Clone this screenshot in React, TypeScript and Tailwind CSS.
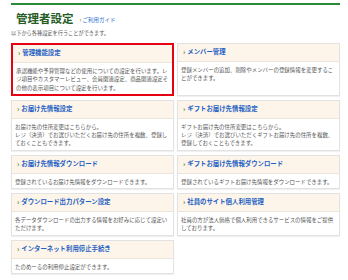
import React from 'react';

interface Item {
  title: string;
  lines: string[];
  active?: boolean;
}

const items: Item[] = [
  {
    title: '管理機能設定',
    lines: [
      '承認機能や予算管理などの使用についての設定を行います。レジ項目やカスタマーレビュー、会員関連設定、商品関連設定その他の表示項目について設定を行います。',
    ],
    active: true,
  },
  {
    title: 'メンバー管理',
    lines: ['登録メンバーの追加、削除やメンバーの登録情報を変更することができます。'],
  },
  {
    title: 'お届け先情報設定',
    lines: ['お届け先の住所変更はこちらから。', 'レジ（決済）でお選びいただくお届け先の住所を複数、登録しておくこともできます。'],
  },
  {
    title: 'ギフトお届け先情報設定',
    lines: ['ギフトお届け先の住所変更はこちらから。', 'レジ（決済）でお選びいただくギフトお届け先の住所を複数、登録しておくこともできます。'],
  },
  {
    title: 'お届け先情報ダウンロード',
    lines: ['登録されているお届け先情報をダウンロードできます。'],
  },
  {
    title: 'ギフトお届け先情報ダウンロード',
    lines: ['登録されているギフトお届け先情報をダウンロードできます。'],
  },
  {
    title: 'ダウンロード出力パターン設定',
    lines: ['各データダウンロードの出力する情報をお好みに応じて設定いただけます。'],
  },
  {
    title: '社員のサイト個人利用管理',
    lines: ['社員の方が法人価格で個人利用できるサービスの情報をご提供しております。'],
  },
  {
    title: 'インターネット利用停止手続き',
    lines: ['たのめーるの利用停止設定ができます。'],
  },
];

function SettingCard({ item }: { item: Item }) {
  return (
    <div
      className={
        item.active
          ? 'bg-white border-2 border-[#e60012]'
          : 'bg-white border border-[#e2e2e2] shadow-[0_1px_1px_rgba(0,0,0,0.06)]'
      }
    >
      {/* header */}
      <div className="h-[18px] flex items-center gap-[2px] px-[5px] bg-[#fdf5ea] border-b border-[#ebe5dc]">
        <span className="text-[#3a8a2e] text-[7px] font-bold leading-none">›</span>
        <span className="text-[#1d5fc4] text-[6.4px] font-bold leading-none">{item.title}</span>
      </div>
      {/* body */}
      <div className="px-[3px] pt-[4px] pb-[2px] text-[5.45px] leading-[8.3px] text-[#555]">
        {item.lines.map((l, i) => (
          <p key={i}>{l}</p>
        ))}
      </div>
    </div>
  );
}

export default function App() {
  return (
    <div
      className="w-[348px] h-[280px] bg-white overflow-hidden"
      style={{ fontFamily: '"Noto Sans CJK JP", "Noto Sans", sans-serif' }}
    >
      <div className="ml-[11px] mr-[8px] pt-[3px]">
        <div className="h-[2px] bg-[#2b8a3a]" />

        {/* title row */}
        <div className="flex items-end gap-[6px] mt-[6px] pl-[5px]">
          <h1 className="text-[#245c24] text-[11.5px] font-bold leading-[14px]">管理者設定</h1>
          <a className="text-[#2a6fd0] text-[5.5px] leading-[8px] mb-[1px]">
            <span className="text-[#3a8a2e] font-bold">›</span> ご利用ガイド
          </a>
        </div>
        <p className="mt-[4px] text-[5.2px] leading-[8px] text-[#555]">以下から各種設定を行うことができます。</p>

        {/* cards */}
        <div className="mt-[6px] grid grid-cols-2 gap-x-[3px] gap-y-[4px]">
          {items.map((it) => (
            <SettingCard key={it.title} item={it} />
          ))}
        </div>
      </div>
    </div>
  );
}
